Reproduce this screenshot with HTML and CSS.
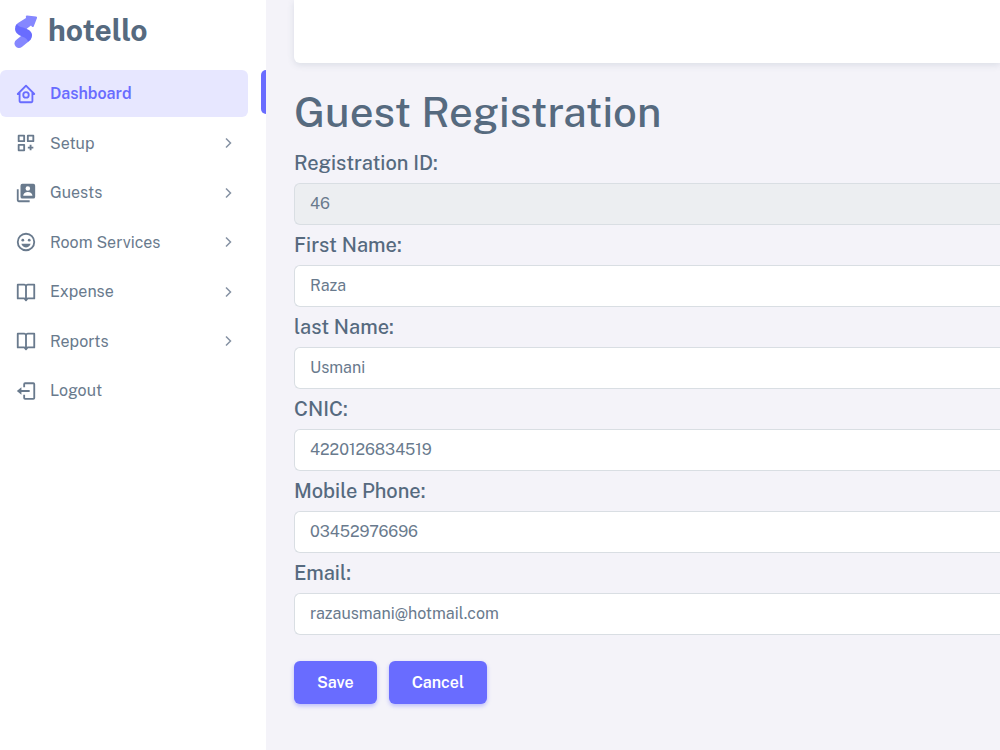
FILE: index.html
```html
<!DOCTYPE html>
<html lang="en">

<head>
    <meta charset="UTF-8">
    <meta name="viewport" content="width=device-width, initial-scale=1.0">
    <title>Guest Registration - hotello</title>
    <link rel="stylesheet" href="styles.css">
</head>

<body>
    <div class="layout">
        <aside class="sidebar">
            <a class="brand" href="#">
                <svg class="brand-logo" width="24" height="34" viewBox="0 0 24 34">
                    <path d="M13 0.500 L22 1.500 Q23.500 1.600 23 3 L19.700 11.500 Q19 12.500 18 11.700 L17 10.500 L13 13.500 L12 16 L3 14 Q0 11 4 8 L12 3 L11.800 1.500 Q12 0.400 13 0.500 Z" fill="#8587ff" />
                    <path d="M5 28.500 L13 22" fill="none" stroke="#8587ff" stroke-width="9" stroke-linecap="round" />
                    <path d="M3 9 Q4 11.500 9 12.500 L14 14.500 Q18.500 17 18 21 Q17.500 24.500 14 26.800 Q13.500 23.500 8 21.500 Q1 19 1 14 Q1 10.500 3 9 Z" fill="#696cff" />
                </svg>
                <span class="brand-text">hotello</span>
            </a>
            <nav>
                <ul class="menu">
                    <li>
                        <a class="menu-link active" href="#">
                            <svg class="menu-icon" viewBox="0 0 24 24"><path d="M12.710 2.290a1 1 0 0 0-1.420 0l-9 9a1 1 0 0 0 0 1.420A1 1 0 0 0 3 13h1v7a2 2 0 0 0 2 2h12a2 2 0 0 0 2-2v-7h1a1 1 0 0 0 .71-1.710zM6 20v-9.590l6-6 6 6V20z" /><path d="M12 9a4 4 0 1 0 0 8 4 4 0 0 0 0-8zm0 6a2 2 0 1 1 0-4 2 2 0 0 1 0 4z" /></svg>
                            <span>Dashboard</span>
                        </a>
                    </li>
                    <li>
                        <a class="menu-link" href="#">
                            <svg class="menu-icon" viewBox="0 0 24 24"><path d="M10 3H4a1 1 0 0 0-1 1v6a1 1 0 0 0 1 1h6a1 1 0 0 0 1-1V4a1 1 0 0 0-1-1zM9 9H5V5h4zM20 3h-6a1 1 0 0 0-1 1v6a1 1 0 0 0 1 1h6a1 1 0 0 0 1-1V4a1 1 0 0 0-1-1zm-1 6h-4V5h4zM10 13H4a1 1 0 0 0-1 1v6a1 1 0 0 0 1 1h6a1 1 0 0 0 1-1v-6a1 1 0 0 0-1-1zm-1 6H5v-4h4zM18 14h-2v2h-2v2h2v2h2v-2h2v-2h-2z" /></svg>
                            <span>Setup</span>
                            <svg class="menu-arrow" viewBox="0 0 14 14"><path d="M5 2.500 L9.500 7 L5 11.500" /></svg>
                        </a>
                    </li>
                    <li>
                        <a class="menu-link" href="#">
                            <svg class="menu-icon" viewBox="0 0 24 24"><path d="M20 2H8a2 2 0 0 0-2 2v12a2 2 0 0 0 2 2h12a2 2 0 0 0 2-2V4a2 2 0 0 0-2-2zm-6 2.500a2.500 2.500 0 1 1 0 5 2.500 2.500 0 0 1 0-5zM19 15H9v-.250C9 12.900 11.250 11 14 11s5 1.900 5 3.750z" /><path d="M4 8H2v12a2 2 0 0 0 2 2h12v-2H4z" /></svg>
                            <span>Guests</span>
                            <svg class="menu-arrow" viewBox="0 0 14 14"><path d="M5 2.500 L9.500 7 L5 11.500" /></svg>
                        </a>
                    </li>
                    <li>
                        <a class="menu-link" href="#">
                            <svg class="menu-icon" viewBox="0 0 24 24"><path d="M12 2a10 10 0 1 0 0 20 10 10 0 0 0 0-20zm0 18a8 8 0 1 1 0-16 8 8 0 0 1 0 16z" /><path d="M12 18c4 0 5-4 5-4H7s1 4 5 4z" /><circle cx="8.500" cy="10" r="1.500" /><circle cx="15.500" cy="10" r="1.500" /></svg>
                            <span>Room Services</span>
                            <svg class="menu-arrow" viewBox="0 0 14 14"><path d="M5 2.500 L9.500 7 L5 11.500" /></svg>
                        </a>
                    </li>
                    <li>
                        <a class="menu-link" href="#">
                            <svg class="menu-icon" viewBox="0 0 24 24"><path d="M21 3h-7a3 3 0 0 0-2 .78A3 3 0 0 0 10 3H3a1 1 0 0 0-1 1v15a1 1 0 0 0 1 1h6.760l1.530 1.710a1 1 0 0 0 1.420 0L14.240 20H21a1 1 0 0 0 1-1V4a1 1 0 0 0-1-1zM11 18.300A3 3 0 0 0 10 18H4V5h6a1 1 0 0 1 1 1zM20 18h-6a3 3 0 0 0-1 .300V6a1 1 0 0 1 1-1h6z" /></svg>
                            <span>Expense</span>
                            <svg class="menu-arrow" viewBox="0 0 14 14"><path d="M5 2.500 L9.500 7 L5 11.500" /></svg>
                        </a>
                    </li>
                    <li>
                        <a class="menu-link" href="#">
                            <svg class="menu-icon" viewBox="0 0 24 24"><path d="M21 3h-7a3 3 0 0 0-2 .78A3 3 0 0 0 10 3H3a1 1 0 0 0-1 1v15a1 1 0 0 0 1 1h6.760l1.530 1.710a1 1 0 0 0 1.420 0L14.240 20H21a1 1 0 0 0 1-1V4a1 1 0 0 0-1-1zM11 18.300A3 3 0 0 0 10 18H4V5h6a1 1 0 0 1 1 1zM20 18h-6a3 3 0 0 0-1 .300V6a1 1 0 0 1 1-1h6z" /></svg>
                            <span>Reports</span>
                            <svg class="menu-arrow" viewBox="0 0 14 14"><path d="M5 2.500 L9.500 7 L5 11.500" /></svg>
                        </a>
                    </li>
                    <li>
                        <a class="menu-link" href="#">
                            <svg class="menu-icon" viewBox="0 0 24 24"><path d="m2 12 5 4v-3h9v-2H7V8z" /><path d="M20 2.500H11a2 2 0 0 0-2 2V8h2V4.500h9v15h-9V16H9v3.500a2 2 0 0 0 2 2h9a2 2 0 0 0 2-2v-15a2 2 0 0 0-2-2z" /></svg>
                            <span>Logout</span>
                        </a>
                    </li>
                </ul>
            </nav>
        </aside>

        <main class="content">
            <div class="card"></div>
            <h1>Guest Registration</h1>
            <form class="guest-form">
                <label for="regId">Registration ID:</label>
                <input type="text" id="regId" value="46" readonly>
                <label for="firstName">First Name:</label>
                <input type="text" id="firstName" value="Raza">
                <label for="lastName">last Name:</label>
                <input type="text" id="lastName" value="Usmani">
                <label for="cnic">CNIC:</label>
                <input type="text" id="cnic" value="4220126834519">
                <label for="mobile">Mobile Phone:</label>
                <input type="text" id="mobile" value="03452976696">
                <label for="email">Email:</label>
                <input type="email" id="email" value="razausmani@hotmail.com">
                <div class="form-buttons">
                    <button type="submit">Save</button>
                    <button type="button">Cancel</button>
                </div>
            </form>
        </main>
    </div>
</body>

</html>
```

FILE: styles.css
```css
* {
    box-sizing: border-box;
}

body {
    margin: 0;
    background-color: #f4f3f9;
    color: #697a8d;
    font-family: "Public Sans", Inter, sans-serif;
    font-size: 16px;
}

.layout {
    display: flex;
    min-height: 100vh;
}

/* Sidebar */
.sidebar {
    flex: 0 0 266px;
    background-color: #fff;
}

.brand {
    display: flex;
    align-items: center;
    gap: 10px;
    height: 64px;
    padding-left: 14px;
    text-decoration: none;
}

.brand-text {
    color: #566a7f;
    font-size: 30px;
    font-weight: 700;
    line-height: 36px;
    padding-bottom: 4px;
}

.menu {
    display: grid;
    align-content: space-between;
    height: 344px;
    margin: 6px 0 0;
    padding: 0;
    list-style: none;
}

.menu-link {
    display: flex;
    align-items: center;
    position: relative;
    height: 47px;
    margin-right: 18px;
    padding: 0 13px 0 15px;
    color: #697a8d;
    text-decoration: none;
}

.menu-icon {
    width: 22px;
    height: 22px;
    margin-right: 13px;
    fill: currentColor;
}

.menu-arrow {
    width: 14px;
    height: 14px;
    margin-left: auto;
    fill: none;
    stroke: #8592a3;
    stroke-width: 1.5;
}

.menu-link.active {
    background-color: #e7e7ff;
    border-radius: 6px;
    color: #696cff;
    font-weight: 600;
}

.menu-link.active::after {
    content: "";
    position: absolute;
    top: 0;
    right: -18px;
    width: 5px;
    height: 44px;
    background-color: #696cff;
    border-radius: 5px 0 0 5px;
}

/* Content */
.content {
    flex: 1;
    min-width: 0;
    padding-left: 28px;
}

.card {
    height: 63px;
    background-color: #fff;
    border-radius: 0 0 0 6px;
    box-shadow: 0 2px 7px rgba(67, 89, 113, 0.14);
}

h1 {
    margin: 25px 0 7px;
    color: #566a7f;
    font-size: 42px;
    font-weight: 500;
    line-height: 48px;
}

.guest-form {
    display: flex;
    flex-direction: column;
}

label {
    margin: 8px 0;
    color: #566a7f;
    font-size: 20px;
    font-weight: 500;
    line-height: 24px;
}

/* fields run up to the right edge of the page */
input {
    width: 100%;
    height: 42px;
    padding: 0 15px 2px;
    border: 1px solid #d9dee3;
    border-right: none;
    border-radius: 6px 0 0 6px;
    background-color: #fff;
    color: #697a8d;
    font-family: inherit;
    font-size: 16px;
}

input[readonly] {
    background-color: #eceef1;
}

.form-buttons {
    display: flex;
    gap: 12px;
    margin: 26px 0;
}

button {
    height: 43px;
    padding: 0 23px;
    border: none;
    border-radius: 6px;
    background-color: #696cff;
    box-shadow: 0 2px 4px rgba(105, 108, 255, 0.4);
    color: #fff;
    font-family: inherit;
    font-size: 16px;
    font-weight: 600;
}
```
